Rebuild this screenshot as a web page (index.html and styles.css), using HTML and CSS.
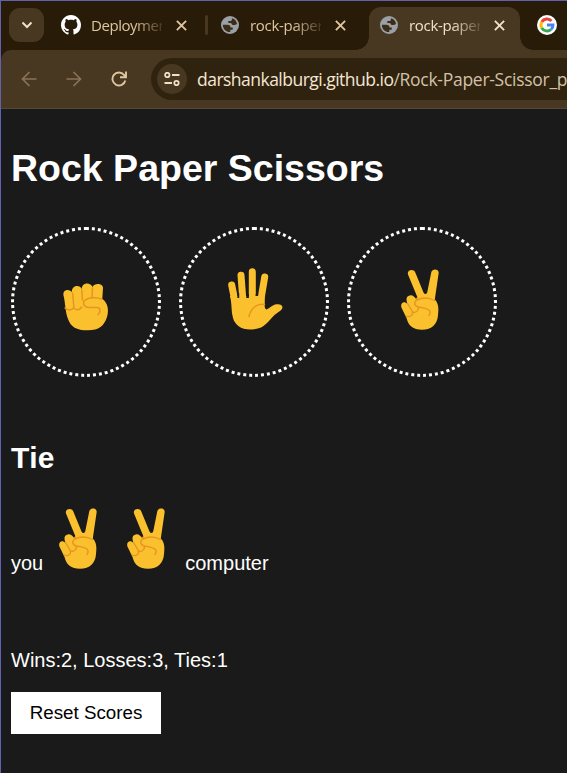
FILE: index.html
```html
<!DOCTYPE html>
<html lang="en">
<head>
<meta charset="utf-8">
<title>rock-paper-scissors</title>
<link rel="stylesheet" href="styles.css">
</head>
<body>
<svg class="defs" width="0" height="0" aria-hidden="true">
  <symbol id="globe" viewBox="0 0 18 18">
    <circle cx="9" cy="9" r="9" fill="#9aa0a6"/>
    <path d="M1.9 8.8h4.3c2.4 0 3.3.8 3.3 2.7h2.2v2.2H9.3v2.4C5 16.3 1.7 13 1.9 8.8ZM10.9 2.2v1.2c0 .9-.8 1.6-1.7 1.6H7.3v2.1h2.2c1.3 0 1.2 2 2.4 2h1.2c1.2 0 1.400-1 2.900-.8C15.9 5.2 14 3 10.9 2.2Z" class="globe-gap"/>
  </symbol>
  <symbol id="close" viewBox="0 0 10 10"><path d="M.8.8l8.4 8.4M9.2.8L.8 9.2" fill="none" stroke="currentColor" stroke-width="1.7"/></symbol>
  <symbol id="peace" viewBox="0 0 38 61">
    <path d="M7 5.500C5.500 1 12.500-.8 14.300 3.500L22.500 23.500Q24.500 26.500 26.200 23.500L30.300 3.300C31.500-1 38.500 0 37.600 4.500L33.800 30.500C37.500 34 37.800 39 37 46 36.500 55 31 60.700 21 60.700 12 60.700 7.500 57 5.500 49L.4 38.500C-1 33.500 3.500 31.500 6.500 35 4.500 30 5.500 27 8.800 26.400 12 26 13.500 28 15.500 30.500L16.500 28.500Z" fill="#fbc02d"/>
    <path d="M6.800 35L10.500 41Q12.500 45 10.500 46.500 8 48.500 5.300 47M11.500 43Q15 44.500 17.300 40.500L17.300 38.500M15.300 30.500L16.500 28.500M33.500 31.500C28 28.500 21 28.500 16 31 12.500 33 13 37 17.500 38 22 38.800 25 39 28 41 30 43.200 29 45 28 46.500" fill="none" stroke="#e69620" stroke-width="1.400" stroke-linecap="round"/>
  </symbol>
</svg>
<div class="window">
  <header class="tabs">
    <span class="search"><svg width="12" height="8" viewBox="0 0 12 8"><path d="M1.500 1.500L6 6l4.500-4.500" fill="none" stroke="currentColor" stroke-width="2"/></svg></span>
    <div class="tab first">
      <svg width="20" height="20" viewBox="0 0 16 16"><path fill="#fff" d="M8 0C3.580 0 0 3.580 0 8c0 3.540 2.290 6.530 5.470 7.590.4.070.55-.17.55-.38 0-.19-.01-.82-.01-1.490-2.010.37-2.530-.49-2.690-.94-.09-.23-.48-.94-.82-1.130-.28-.15-.68-.52-.01-.53.63-.01 1.080.58 1.230.82.72 1.210 1.870.87 2.330.66.07-.52.28-.87.51-1.070-1.780-.2-3.640-.89-3.640-3.950 0-.87.31-1.590.82-2.150-.08-.2-.36-1.020.08-2.120 0 0 .67-.21 2.200.82.64-.18 1.320-.27 2-.27s1.360.09 2 .27c1.530-1.040 2.200-.82 2.200-.82.44 1.100.16 1.920.08 2.120.51.56.82 1.270.82 2.150 0 3.070-1.870 3.750-3.650 3.950.29.25.54.73.54 1.480 0 1.070-.01 1.930-.01 2.200 0 .21.15.46.55.38A8.010 8.010 0 0 0 16 8c0-4.420-3.580-8-8-8Z"/></svg>
      <span class="label">Deployments</span>
      <svg class="close" width="11" height="11"><use href="#close"/></svg>
    </div>
    <i class="divider"></i>
    <div class="tab second">
      <svg width="18" height="18"><use href="#globe"/></svg>
      <span class="label">rock-paper-scissors</span>
      <svg class="close" width="11" height="11"><use href="#close"/></svg>
    </div>
    <div class="tab active">
      <svg width="18" height="18"><use href="#globe"/></svg>
      <span class="label">rock-paper-scissors</span>
      <svg class="close" width="11" height="11"><use href="#close"/></svg>
    </div>
    <svg class="google" width="20" height="20" viewBox="0 0 20 20"><circle cx="10" cy="10" r="10" fill="#fff"/><g fill="none" stroke-width="2.900"><path d="M4.800 7A6 6 0 0 1 14.500 6" stroke="#ea4335"/><path d="M4.800 13A6 6 0 0 1 4.800 7" stroke="#fbbc05"/><path d="M14 14.500A6 6 0 0 1 4.800 13" stroke="#34a853"/><path d="M10 10H16A6 6 0 0 1 14 14.500" stroke="#4285f4"/></g></svg>
  </header>
  <nav class="toolbar">
    <svg class="arrow" width="16" height="16" viewBox="0 0 16 16"><path d="M15.500 8H2M8.500 1L1.500 8l7 7" fill="none" stroke="currentColor" stroke-width="1.700"/></svg>
    <svg class="arrow" width="16" height="16" viewBox="0 0 16 16"><path d="M.5 8H14M7.500 1l7 7-7 7" fill="none" stroke="currentColor" stroke-width="1.700"/></svg>
    <svg class="reload" width="16" height="16" viewBox="0 0 16 16"><path d="M14.300 9.500A6.500 6.500 0 1 1 13 3.800L14.800 6M15 .5V6.300H9" fill="none" stroke="currentColor" stroke-width="1.900"/></svg>
    <div class="address">
      <span class="site"><svg width="16" height="14" viewBox="0 0 16 14"><g fill="none" stroke="currentColor" stroke-width="1.800"><circle cx="3.300" cy="3" r="2.200"/><path d="M8 3h7.500M.5 11H8"/><circle cx="12.500" cy="11" r="2.200"/></g></svg></span>
      <span class="url"><b>darshankalburgi.github.io</b><span class="path">/Rock-Paper-Scissor_project/</span></span>
    </div>
  </nav>
  <main>
    <h1>Rock Paper Scissors</h1>
    <div class="moves">
      <button class="move"><svg width="46" height="48" viewBox="0 0 46 48"><path d="M.4 12C-.3 6.500 6 5.500 8.800 9 8.500 2 17 1 18.800 6 18.500-.5 27.500-1.500 29.500 4 31-.2 40 0 40 5L39.300 16C45 20 46 27 44 34 41 43 36 47.300 25 47.300 13 47.300 8 44 5 36 2 28 2.500 20 .4 12Z" fill="#fbc02d"/><path d="M2 25Q7 29 10.500 25M10.800 25Q15 29 18.700 24M9.500 10L11 25M18.800 7L19.500 17M29.500 5L29 14M38.500 16C35 14.500 28 14 24 16 18.500 18.500 20 24 26 24.500L34 24.500C37.500 24.500 38 29 35 31.500" fill="none" stroke="#e69620" stroke-width="1.500" stroke-linecap="round"/></svg></button>
      <button class="move"><svg width="56" height="62" viewBox="0 0 56 62"><g fill="none" stroke="#fbc02d" stroke-width="7" stroke-linecap="round"><path d="M3.700 17L7.500 36M13 7.200L15 34M24.300 3.700V34M36.700 9L32.500 34"/></g><path d="M2 28H36.500L36.800 35C36.300 38 36.800 41 38.500 41.500 42 40 43 38 47 36.500 51 35.500 54.500 36.500 54.500 39.500 54 42.500 50 44 46.500 47 40 53 37 61 24 61.500 13 62 7 57 5 50 3 43 4 37 2.500 30Z" fill="#fbc02d"/><path class="gap" d="M9.400 26V30H11.200V25ZM18.300 26V30H20.900V26ZM27.700 26V28H29.900L30.300 26Z"/><path d="M21 48.500C23 40 29 35 36.500 36.500" fill="none" stroke="#e69620" stroke-width="1.500" stroke-linecap="round"/></svg></button>
      <button class="move"><svg width="38" height="61"><use href="#peace"/></svg></button>
    </div>
    <h2>Tie</h2>
    <p class="result"><span>you</span><svg class="mine" width="38" height="61"><use href="#peace"/></svg><svg class="theirs" width="38" height="61"><use href="#peace"/></svg><span>computer</span></p>
    <p class="score">Wins:2, Losses:3, Ties:1</p>
    <button class="reset">Reset Scores</button>
  </main>
</div>
</body>
</html>
```
FILE: styles.css
```css
* { box-sizing: border-box; }
body { margin: 0; background: #1a1a1a; overflow: hidden; }
.defs { position: absolute; }
.globe-gap { fill: #3a2c17; }
.gap { fill: #1a1a1a; }
.window {
  height: 773px;
  border-top: 1px solid #6260b0;
  border-left: 1px solid #6260b0;
  overflow: hidden;
  font-family: "Liberation Sans", Arial, sans-serif;
}
svg { display: block; flex: none; }

.tabs {
  display: flex;
  height: 49px;
  padding: 6px 0 0 8px;
  background: #281c09;
  color: #dfc5a0;
}
.search {
  display: flex;
  flex: none;
  align-items: center;
  justify-content: center;
  width: 35px;
  height: 34px;
  margin-top: 1px;
  border-radius: 11px;
  background: #493821;
  color: #f1dfc8;
}
.tab { display: flex; flex: none; align-items: center; height: 43px; padding-bottom: 7px; }
.first { width: 144px; margin-left: 17px; }
.second { width: 148px; margin-left: 13px; }
.tab .label {
  flex: none;
  width: 71px;
  margin-left: 11px;
  overflow: hidden;
  white-space: nowrap;
  font: 15px/24px "Open Sans", sans-serif;
  letter-spacing: -0.3px;
  mask-image: linear-gradient(to right, #000 43px, transparent 76px);
}
.first .label { margin-left: 10px; letter-spacing: -0.45px; }
.close { margin-left: 14px; }
.divider { width: 3px; height: 20px; margin-top: 8px; border-radius: 2px; background: #493821; }
.active {
  position: relative;
  width: 151px;
  padding-left: 11px;
  border-radius: 12px 12px 0 0;
  background: #493821;
  color: #f3e0ca;
}
.active::before, .active::after {
  content: "";
  position: absolute;
  bottom: 0;
  width: 13px;
  height: 13px;
}
.active::before { left: -13px; background: radial-gradient(circle at 0 0, transparent 12.5px, #493821 13px); }
.active::after { right: -13px; background: radial-gradient(circle at 100% 0, transparent 12.5px, #493821 13px); }
.google { margin: 8px 0 0 17px; }

.toolbar {
  display: flex;
  align-items: center;
  height: 59px;
  padding-left: 20px;
  border-bottom: 1px solid #4e4a3c;
  border-top-left-radius: 10px;
  background: #493821;
  box-shadow: -10px -10px 0 -1px #281c09;
}
.arrow { margin-right: 29px; color: #897258; }
.reload { color: #dfc5a0; }
.address {
  display: flex;
  flex: 1;
  align-items: center;
  height: 42px;
  margin-left: 24px;
  padding-left: 6px;
  border-radius: 21px 0 0 21px;
  background: #2f230f;
  overflow: hidden;
}
.site {
  display: flex;
  flex: none;
  align-items: center;
  justify-content: center;
  width: 30px;
  height: 30px;
  border-radius: 50%;
  background: #493821;
  color: #f1dfc8;
}
.url {
  margin-left: 10px;
  white-space: nowrap;
  font: 17.5px/28px "Open Sans", sans-serif;
  letter-spacing: -0.52px;
  color: #d3c1a7;
}
.url b { font-weight: 400; color: #f6e6d3; }
.path { letter-spacing: -0.28px; }

main { padding: 0 10px; color: #fff; font-size: 20px; }
h1 { margin: 38px 0 0; font-size: 37.5px; line-height: 43px; }
.moves { display: flex; gap: 18px; margin-top: 37px; }
.move {
  display: flex;
  align-items: center;
  justify-content: center;
  width: 150px;
  height: 150px;
  padding: 9px 0 0;
  border: 3px dotted #fff;
  border-radius: 50%;
  background: transparent;
}
.move:nth-child(2) { padding: 0 0 7px 3px; }
.move:nth-child(3) { padding: 0 5px 6px 0; }
h2 { margin: 63px 0 0; font-size: 30px; line-height: 35px; font-kerning: none; }
.result { display: flex; align-items: flex-end; height: 67px; margin: 33px 0 0; line-height: 23px; }
.mine, .theirs { margin-bottom: 6px; }
.mine { margin-left: 16px; }
.theirs { margin-left: 30px; margin-right: 20px; }
.score { margin: 74px 0 0; line-height: 23px; }
.reset {
  display: block;
  width: 150px;
  height: 42px;
  margin-top: 20px;
  padding: 0;
  border: 0;
  background: #fff;
  color: #000;
  font: 18.75px "Liberation Sans", Arial, sans-serif;
}
```
